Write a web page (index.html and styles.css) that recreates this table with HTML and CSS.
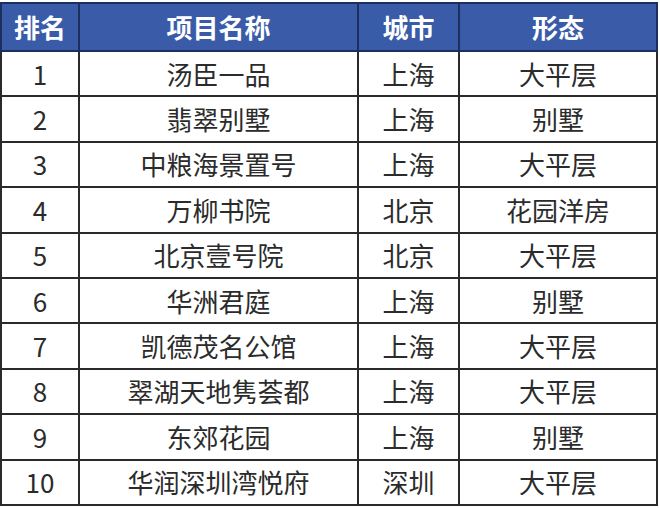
FILE: index.html
```html
<!DOCTYPE html>
<html lang="zh">
<head>
<meta charset="utf-8">
<link rel="stylesheet" href="styles.css">
</head>
<body>
<table class="rank">
  <colgroup>
    <col class="c1"><col class="c2"><col class="c3"><col class="c4">
  </colgroup>
  <thead>
    <tr><th>排名</th><th>项目名称</th><th>城市</th><th>形态</th></tr>
  </thead>
  <tbody>
    <tr><td>1</td><td>汤臣一品</td><td>上海</td><td>大平层</td></tr>
    <tr><td>2</td><td>翡翠别墅</td><td>上海</td><td>别墅</td></tr>
    <tr><td>3</td><td>中粮海景置号</td><td>上海</td><td>大平层</td></tr>
    <tr><td>4</td><td>万柳书院</td><td>北京</td><td>花园洋房</td></tr>
    <tr><td>5</td><td>北京壹号院</td><td>北京</td><td>大平层</td></tr>
    <tr><td>6</td><td>华洲君庭</td><td>上海</td><td>别墅</td></tr>
    <tr><td>7</td><td>凯德茂名公馆</td><td>上海</td><td>大平层</td></tr>
    <tr><td>8</td><td>翠湖天地隽荟都</td><td>上海</td><td>大平层</td></tr>
    <tr><td>9</td><td>东郊花园</td><td>上海</td><td>别墅</td></tr>
    <tr><td>10</td><td>华润深圳湾悦府</td><td>深圳</td><td>大平层</td></tr>
  </tbody>
</table>
</body>
</html>
```
FILE: styles.css
```css
html, body {
  margin: 0;
  padding: 0;
  background: #ffffff;
}
body {
  padding-top: 2px;
  font-family: "Noto Sans CJK SC", "Noto Sans", sans-serif;
}
.rank {
  border-collapse: collapse;
  table-layout: fixed;
  width: 656px;
  margin-left: 0;
}
.c1 { width: 78px; }
.c2 { width: 279px; }
.c3 { width: 101px; }
.c4 { width: 198px; }
.rank th, .rank td {
  border: 2px solid #2a2a2a;
  text-align: center;
  vertical-align: middle;
  padding: 0;
  line-height: 1;
}
.rank th {
  background: #3a5ba8;
  color: #ffffff;
  font-weight: 700;
  font-size: 26px;
  height: 46px;
  border-color: #1d2f5e;
}
.rank td {
  color: #2b2b2b;
  font-size: 26px;
  font-weight: 400;
  height: 43.4px;
}
```
